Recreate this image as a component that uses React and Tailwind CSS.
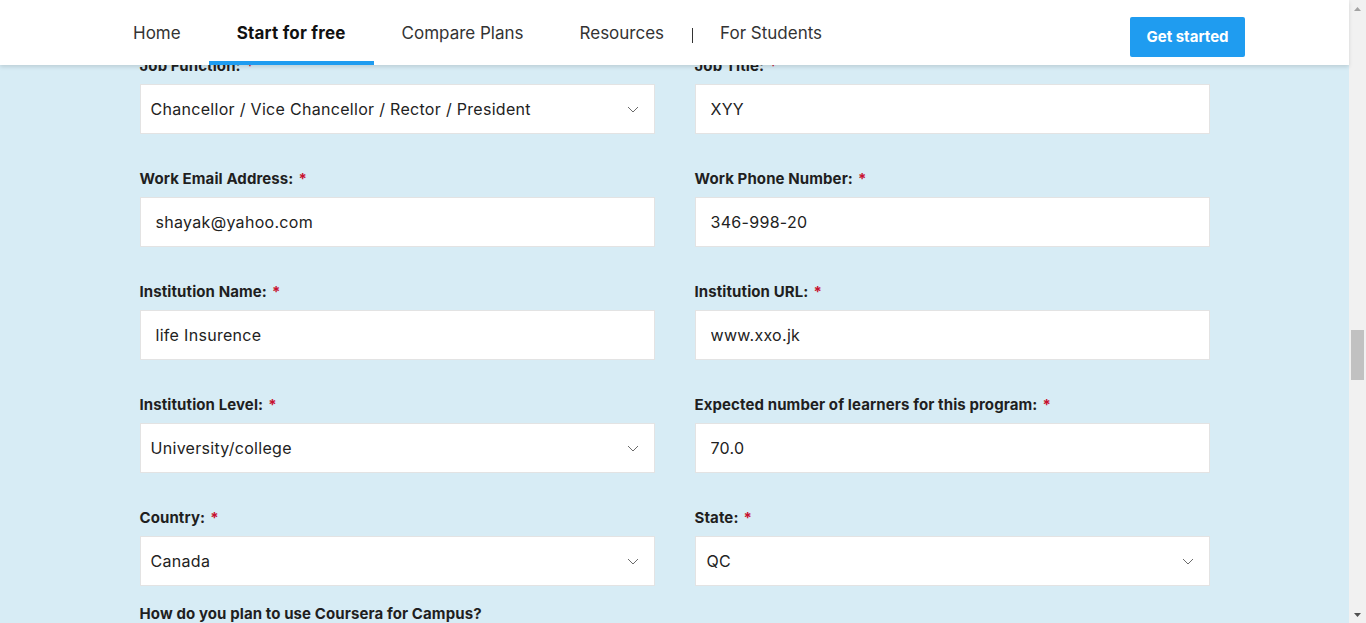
import { useState } from 'react'

const navItems = ['Home', 'Start for free', 'Compare Plans', 'Resources']

function Chevron() {
  return (
    <svg width="12" height="7" viewBox="0 0 12 7" className="shrink-0">
      <polyline points="1,1 6,6 11,1" fill="none" stroke="#6b6b6b" strokeWidth="1" />
    </svg>
  )
}

function Label({ text, required = true }) {
  return (
    <label className="block h-[22px] mb-[8px] pt-[2px] text-[15px] leading-5 font-bold tracking-[0.1px] text-[#1f1f1f]">
      {text}
      {required && <span className="ml-[5px] text-[#c8102e]">*</span>}
    </label>
  )
}

function TextField({ label, value }) {
  const [val, setVal] = useState(value)
  return (
    <div>
      <Label text={label} />
      <input
        type="text"
        value={val}
        onChange={(e) => setVal(e.target.value)}
        className="w-full h-[50px] px-[15px] bg-white border border-[#e3e3e3] text-[16px] tracking-[0.3px] text-[#222] outline-none"
      />
    </div>
  )
}

function SelectField({ label, value, pad = 'pl-[10px]' }) {
  return (
    <div>
      <Label text={label} />
      <div className={`flex items-center justify-between w-full h-[50px] ${pad} pr-[15px] bg-white border border-[#e3e3e3] text-[16px] tracking-[0.3px] text-[#222]`}>
        <span>{value}</span>
        <Chevron />
      </div>
    </div>
  )
}

function Scrollbar() {
  return (
    <div className="w-[17px] shrink-0 bg-[#f1f1f1] flex flex-col items-center">
      <div className="h-[17px] flex items-center justify-center">
        <svg width="7" height="4" viewBox="0 0 7 4"><polygon points="0,4 3.5,0 7,4" fill="#a3a3a3" /></svg>
      </div>
      <div className="flex-1 w-full relative">
        <div className="absolute left-[2px] right-[2px] top-[313px] h-[50px] bg-[#c1c1c1]" />
      </div>
      <div className="h-[17px] flex items-center justify-center">
        <svg width="7" height="4" viewBox="0 0 7 4"><polygon points="0,0 3.5,4 7,0" fill="#505050" /></svg>
      </div>
    </div>
  )
}

export default function App() {
  return (
    <div className="flex h-[623px] overflow-hidden" style={{ fontFamily: 'Inter, "Open Sans", sans-serif' }}>
      <div className="relative flex-1 bg-[#d7ecf5]">
        <header className="absolute top-0 left-0 right-0 z-10 h-[65px] bg-white shadow-[0_2px_4px_rgba(0,0,0,0.12)] flex items-center pl-[105px] pr-[104px]">
          <nav className="flex items-stretch h-full pt-[2px]">
            {navItems.map((item, i) => (
              <a
                key={item}
                className={`relative flex items-center px-[28px] text-[17px] ${i === 1 ? 'font-bold tracking-[0.2px] text-[#111]' : 'text-[#333]'}`}
              >
                {item}
                {i === 1 && <span className="absolute left-0 right-0 bottom-0 h-1 bg-[#1f9cf0]" />}
              </a>
            ))}
            <span className="self-center w-px h-[15px] mt-1 bg-[#333]" />
            <a className="flex items-center px-[27px] text-[17px] text-[#333]">For Students</a>
          </nav>
          <button className="ml-auto mt-[9px] w-[115px] h-10 rounded-[2px] bg-[#1f9cf0] text-white text-[15px] font-bold">
            Get started
          </button>
        </header>

        <main className="w-[1070px] mx-auto pt-[54px]">
          <div className="grid grid-cols-2 gap-x-10 gap-y-[33px]">
            <SelectField label="Job Function:" value="Chancellor / Vice Chancellor / Rector / President" />
            <TextField label="Job Title:" value="XYY" />
            <TextField label="Work Email Address:" value="shayak@yahoo.com" />
            <TextField label="Work Phone Number:" value="346-998-20" />
            <TextField label="Institution Name:" value="life Insurence" />
            <TextField label="Institution URL:" value="www.xxo.jk" />
            <SelectField label="Institution Level:" value="University/college" />
            <TextField label="Expected number of learners for this program:" value="70.0" />
            <SelectField label="Country:" value="Canada" />
            <SelectField label="State:" value="QC" pad="pl-[11px]" />
          </div>
          <div className="mt-[16px]">
            <Label text="How do you plan to use Coursera for Campus?" required={false} />
          </div>
        </main>
      </div>
      <Scrollbar />
    </div>
  )
}
